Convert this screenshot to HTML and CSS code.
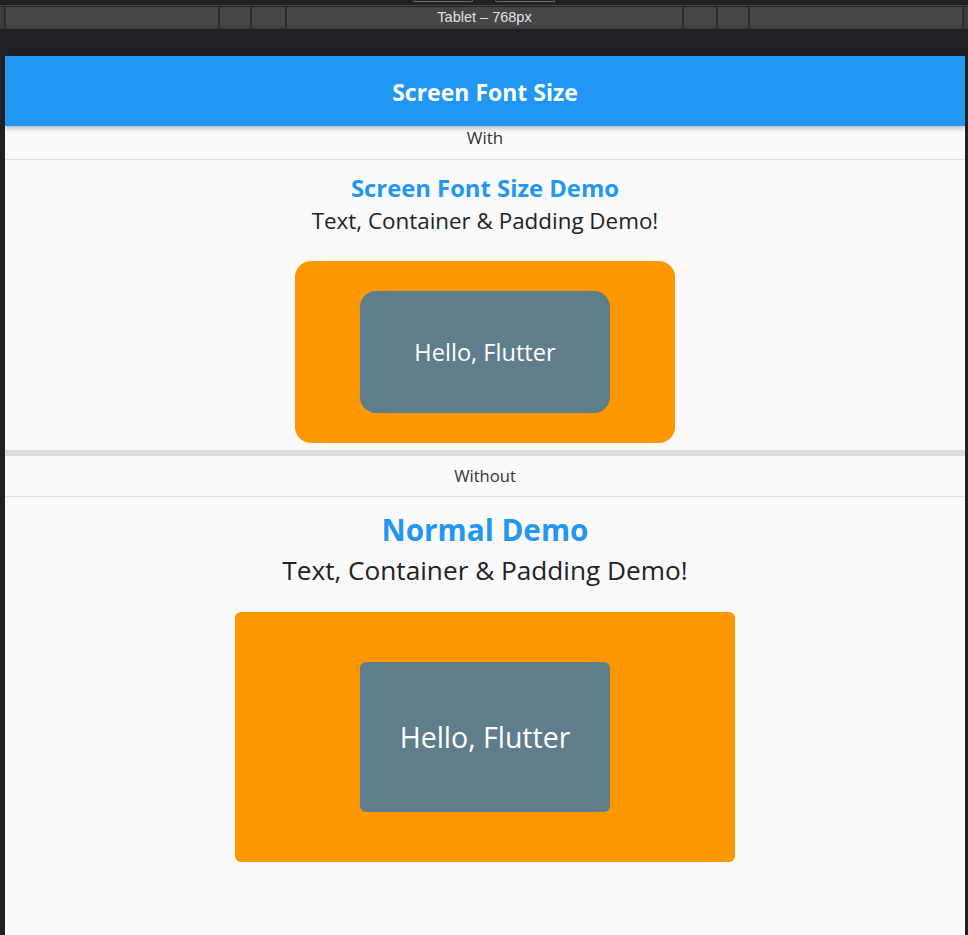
FILE: index.html
```html
<!DOCTYPE html>
<html lang="en">
<head>
<meta charset="utf-8">
<title>Screen Font Size</title>
<link rel="stylesheet" href="styles.css">
</head>
<body>
<div class="chrome">
  <div class="top-strip">
    <span class="tab-btn"></span>
    <span class="tab-btn"></span>
  </div>
  <div class="toolbar">
    <div class="edge"></div>
    <div class="seg w212"></div>
    <div class="seg w30"></div>
    <div class="seg w33"></div>
    <div class="seg grow">Tablet – 768px</div>
    <div class="seg w32"></div>
    <div class="seg w30"></div>
    <div class="seg w212"></div>
    <div class="edge"></div>
  </div>
  <div class="toolbar-foot"></div>
</div>

<div class="device">
  <header class="appbar">Screen Font Size</header>

  <div class="label label-with">With</div>
  <section class="demo demo-scaled">
    <h2 class="demo-title">Screen Font Size Demo</h2>
    <p class="demo-sub">Text, Container &amp; Padding Demo!</p>
    <div class="outer">
      <div class="inner">Hello, Flutter</div>
    </div>
  </section>

  <div class="band"></div>

  <div class="label label-without">Without</div>
  <section class="demo demo-normal">
    <h2 class="demo-title">Normal Demo</h2>
    <p class="demo-sub">Text, Container &amp; Padding Demo!</p>
    <div class="outer">
      <div class="inner">Hello, Flutter</div>
    </div>
  </section>
</div>
</body>
</html>
```

FILE: styles.css
```css
* { box-sizing: border-box; }
html, body {
  margin: 0;
  padding: 0;
  background: #202124;
  height: 935px;
  overflow: hidden;
  font-family: "Open Sans", "Noto Sans", sans-serif;
}

/* browser chrome */
.chrome { height: 56px; }
.top-strip {
  height: 6px;
  border-bottom: 1px solid #46474a;
  display: flex;
  justify-content: center;
  gap: 22px;
}
.tab-btn {
  width: 60px;
  height: 2px;
  border: 1px solid #6b6c6f;
  border-top: none;
  border-radius: 0 0 3px 3px;
}
.toolbar {
  margin-top: 1px;
  height: 20px;
  display: flex;
  gap: 2px;
  background: #2a2b2d;
}
.edge { width: 4px; background: #3a3b3e; }
.seg {
  background: #464646;
  color: #e0e0e0;
  font-family: "Liberation Sans", "DejaVu Sans", sans-serif;
  font-size: 14.5px;
  line-height: 21px;
  text-align: center;
}
.w212 { width: 212px; }
.w30 { width: 30px; }
.w33 { width: 33px; }
.w32 { width: 32px; }
.grow { flex: 1; }
.toolbar-foot { height: 2px; background: #38393c; }

/* device */
.device {
  margin-left: 5px;
  width: 960px;
  height: 879px;
  background: #fafafa;
  display: flex;
  flex-direction: column;
  align-items: center;
}
.appbar {
  align-self: stretch;
  height: 70px;
  background: #2196f3;
  color: #fff;
  font-weight: 700;
  font-size: 23px;
  line-height: 72px;
  text-align: center;
  box-shadow: 0 2px 5px rgba(0,0,0,0.3);
  position: relative;
  z-index: 1;
}
.label {
  align-self: stretch;
  text-align: center;
  color: #333;
  line-height: 24px;
  border-bottom: 1px solid #e0e0e0;
}
.label-with { padding: 0 0 9px; height: 34px; font-size: 17px; }
.label-without { padding: 8px 0 8px; height: 41px; font-size: 16.6px; }

.demo {
  display: flex;
  flex-direction: column;
  align-items: center;
}
.demo-title {
  margin: 0;
  color: #2196f3;
  font-weight: 700;
}
.demo-sub {
  margin: 0;
  color: #222;
  font-weight: 400;
}
.outer {
  background: #ff9800;
  display: flex;
  align-items: center;
  justify-content: center;
}
.inner {
  background: #607d8b;
  color: #fff;
  display: flex;
  align-items: center;
  justify-content: center;
}

.demo-scaled .demo-title { margin-top: 13px; font-size: 23.8px; line-height: 30px; }
.demo-scaled .demo-sub { font-size: 22.4px; line-height: 36px; }
.demo-scaled .outer { margin-top: 22px; width: 380px; height: 182px; border-radius: 16px; }
.demo-scaled .inner { width: 250px; height: 122px; border-radius: 16px; font-size: 23.6px; }

.band {
  align-self: stretch;
  height: 6px;
  margin-top: 7px;
  background: #dcdcdc;
}

.demo-normal .demo-title { margin-top: 13px; font-size: 29.7px; line-height: 40px; }
.demo-normal .demo-sub { font-size: 26.2px; line-height: 40px; }
.demo-normal .outer { margin-top: 22px; width: 500px; height: 250px; border-radius: 6px; }
.demo-normal .inner { width: 250px; height: 150px; border-radius: 6px; font-size: 28.5px; }
```
